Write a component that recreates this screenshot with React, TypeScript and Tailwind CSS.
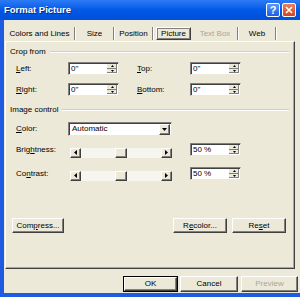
import React from "react";

const FONT = { fontFamily: '"Liberation Sans", Arial, sans-serif' };

function Btn3D({ className = "", children }: { className?: string; children?: React.ReactNode }) {
  return (
    <div
      className={`box-border flex items-center justify-center bg-[#ECE9D8] border border-t-white border-l-white border-r-[#404040] border-b-[#404040] shadow-[inset_-1px_-1px_0_#808080] ${className}`}
    >
      {children}
    </div>
  );
}

function Tri({ dir, size = 3, color = "#000" }: { dir: "up" | "down" | "left" | "right"; size?: number; color?: string }) {
  const s = size;
  let pts = "";
  let w = s * 2 - 1;
  let h = s;
  if (dir === "up") pts = `0,${s} ${w},${s} ${w / 2},0`;
  if (dir === "down") pts = `0,0 ${w},0 ${w / 2},${s}`;
  if (dir === "left") {
    w = s;
    h = s * 2 - 1;
    pts = `${s},0 ${s},${h} 0,${h / 2}`;
  }
  if (dir === "right") {
    w = s;
    h = s * 2 - 1;
    pts = `0,0 0,${h} ${s},${h / 2}`;
  }
  return (
    <svg width={w} height={h} viewBox={`0 0 ${w} ${h}`} className="block">
      <polygon points={pts} fill={color} />
    </svg>
  );
}

function SpinInput({ value, className = "" }: { value: string; className?: string }) {
  return (
    <div
      className={`box-border h-[13px] flex items-stretch bg-white border border-t-[#808080] border-l-[#808080] border-r-[#ECE9D8] border-b-[#ECE9D8] shadow-[inset_1px_1px_0_#404040] ${className}`}
    >
      <div className="flex-1 pl-[2px] text-[8px] leading-[11px] text-black">{value}</div>
      <div className="w-[11px] flex flex-col py-[1px] pr-[1px] gap-[0px]">
        <Btn3D className="flex-1 !border-0 shadow-[inset_-1px_-1px_0_#808080,inset_1px_1px_0_#fff]">
          <Tri dir="up" size={2} />
        </Btn3D>
        <Btn3D className="flex-1 !border-0 shadow-[inset_-1px_-1px_0_#808080,inset_1px_1px_0_#fff]">
          <Tri dir="down" size={2} />
        </Btn3D>
      </div>
    </div>
  );
}

function Slider({ className = "" }: { className?: string }) {
  return (
    <div className={`h-[10px] w-[102px] flex ${className}`}>
      <Btn3D className="w-[11px] h-full">
        <Tri dir="left" size={3} />
      </Btn3D>
      <div className="flex-1 flex bg-[#F6F5F0]">
        <div className="w-[34px]" />
        <Btn3D className="w-[12px] h-full" />
      </div>
      <Btn3D className="w-[11px] h-full">
        <Tri dir="right" size={3} />
      </Btn3D>
    </div>
  );
}

function GroupHeader({ label }: { label: string }) {
  return (
    <div className="h-[10px] flex items-center pl-[4px] pr-[5px]">
      <span className="text-[8px] leading-[10px] text-black whitespace-nowrap">{label}</span>
      <div className="flex-1 ml-[4px] h-[2px] border-t border-t-[#D0D0BF] border-b border-b-white" />
    </div>
  );
}

function Sep() {
  return <div className="w-[2px] h-[13px] border-l border-l-[#808080] border-r border-r-white" />;
}

function Tab({ w, label, disabled }: { w: number; label: string; disabled?: boolean }) {
  return (
    <div
      className={`h-[13px] flex items-center justify-center text-[8px] whitespace-nowrap ${
        disabled ? "text-[#A7A6A0]" : "text-black"
      }`}
      style={{ width: w }}
    >
      {label}
    </div>
  );
}

export default function App() {
  return (
    <div className="w-[300px] h-[297px] flex flex-col overflow-hidden bg-[#1F5BE0]" style={FONT}>
      {/* Title bar */}
      <div className="h-[20px] flex items-center bg-gradient-to-b from-[#2C7BF5] via-[#0058E6] to-[#0050D8] pl-[4px] pr-[4px]">
        <span className="text-[9.5px] font-bold text-white [text-shadow:1px_1px_0_#0a2a80]">Format Picture</span>
        <div className="flex-1" />
        <div className="w-[14px] h-[14px] rounded-[2px] border border-white bg-gradient-to-b from-[#5C98F8] to-[#1C5CE8] flex items-center justify-center text-white text-[11px] font-bold leading-none">
          ?
        </div>
        <div className="w-[14px] h-[14px] ml-[2px] rounded-[2px] border border-white bg-gradient-to-b from-[#E8805F] to-[#D2431E] flex items-center justify-center">
          <svg width="8" height="8" viewBox="0 0 8 8">
            <path d="M1 1 L7 7 M7 1 L1 7" stroke="#fff" strokeWidth="1.6" />
          </svg>
        </div>
      </div>

      {/* Body */}
      <div className="flex-1 ml-[4px] mb-[4px] bg-[#ECE9D8] flex flex-col">
        {/* Tabs */}
        <div className="mt-[7px] h-[14px] flex items-start">
          <div className="w-[1px]" />
          <Tab w={69} label="Colors and Lines" />
          <Sep />
          <Tab w={37} label="Size" />
          <Sep />
          <Tab w={37} label="Position" />
          <Sep />
          <div className="w-[39px] h-[13px] px-[2px]">
            <div className="h-[13px] box-border border border-t-white border-l-white border-r-[#404040] border-b-[#404040] outline outline-1 outline-[#808080] -outline-offset-2 flex items-center justify-center text-[8px] text-black">
              Picture
            </div>
          </div>
          <Tab w={44} label="Text Box" disabled />
          <Sep />
          <Tab w={36} label="Web" />
          <Sep />
        </div>

        {/* Panel */}
        <div className="ml-[1px] w-[290px] h-[228px] box-border border border-t-white border-l-white border-r-[#404040] border-b-[#404040] shadow-[inset_-1px_-1px_0_#ACA899] flex flex-col text-[8px] text-black">
          <div className="mt-[5px]">
            <GroupHeader label="Crop from" />
          </div>
          <div className="mt-[5px] h-[13px] flex items-center pl-[10px]">
            <span className="w-[52px]"><u>L</u>eft:</span>
            <SpinInput value={'0"'} className="w-[51px]" />
            <span className="ml-[18px] w-[53px]"><u>T</u>op:</span>
            <SpinInput value={'0"'} className="w-[51px]" />
          </div>
          <div className="mt-[8px] h-[13px] flex items-center pl-[10px]">
            <span className="w-[52px]"><u>R</u>ight:</span>
            <SpinInput value={'0"'} className="w-[51px]" />
            <span className="ml-[18px] w-[53px]"><u>B</u>ottom:</span>
            <SpinInput value={'0"'} className="w-[51px]" />
          </div>
          <div className="mt-[9px]">
            <GroupHeader label="Image control" />
          </div>
          <div className="mt-[7px] h-[14px] flex items-center pl-[10px]">
            <span className="w-[52px]"><u>C</u>olor:</span>
            <div className="box-border w-[104px] h-[14px] flex bg-white border border-t-[#808080] border-l-[#808080] border-r-[#ECE9D8] border-b-[#ECE9D8] shadow-[inset_1px_1px_0_#404040]">
              <div className="flex-1 pl-[3px] leading-[12px]">Automatic</div>
              <Btn3D className="w-[11px] h-[11px] mt-[1px] mr-[1px]">
                <Tri dir="down" size={3} />
              </Btn3D>
            </div>
          </div>
          <div className="mt-[7px] h-[13px] flex items-center pl-[10px]">
            <span className="w-[54px]">Brig<u>h</u>tness:</span>
            <Slider className="mt-[6px]" />
            <SpinInput value="50 %" className="ml-[18px] w-[51px]" />
          </div>
          <div className="mt-[11px] h-[13px] flex items-center pl-[10px]">
            <span className="w-[54px]">Co<u>n</u>trast:</span>
            <Slider className="mt-[4px]" />
            <SpinInput value="50 %" className="ml-[18px] w-[51px]" />
          </div>
          <div className="mt-[38px] h-[15px] flex items-center pl-[6px]">
            <Btn3D className="w-[52px] h-[15px]">
              <span>Com<u>p</u>ress...</span>
            </Btn3D>
            <div className="w-[109px]" />
            <Btn3D className="w-[54px] h-[15px]">
              <span>R<u>e</u>color...</span>
            </Btn3D>
            <div className="w-[5px]" />
            <Btn3D className="w-[54px] h-[15px]">
              <span>Re<u>s</u>et</span>
            </Btn3D>
          </div>
        </div>

        {/* Bottom buttons */}
        <div className="mt-[7px] h-[16px] flex items-center text-[8px] text-black">
          <div className="w-[119px]" />
          <div className="w-[55px] h-[16px] border border-black box-border">
            <Btn3D className="w-full h-full">OK</Btn3D>
          </div>
          <div className="w-[2px]" />
          <Btn3D className="w-[58px] h-[16px]">Cancel</Btn3D>
          <div className="w-[3px]" />
          <Btn3D className="w-[57px] h-[16px] text-[#A7A6A0]">Preview</Btn3D>
        </div>
      </div>
    </div>
  );
}
